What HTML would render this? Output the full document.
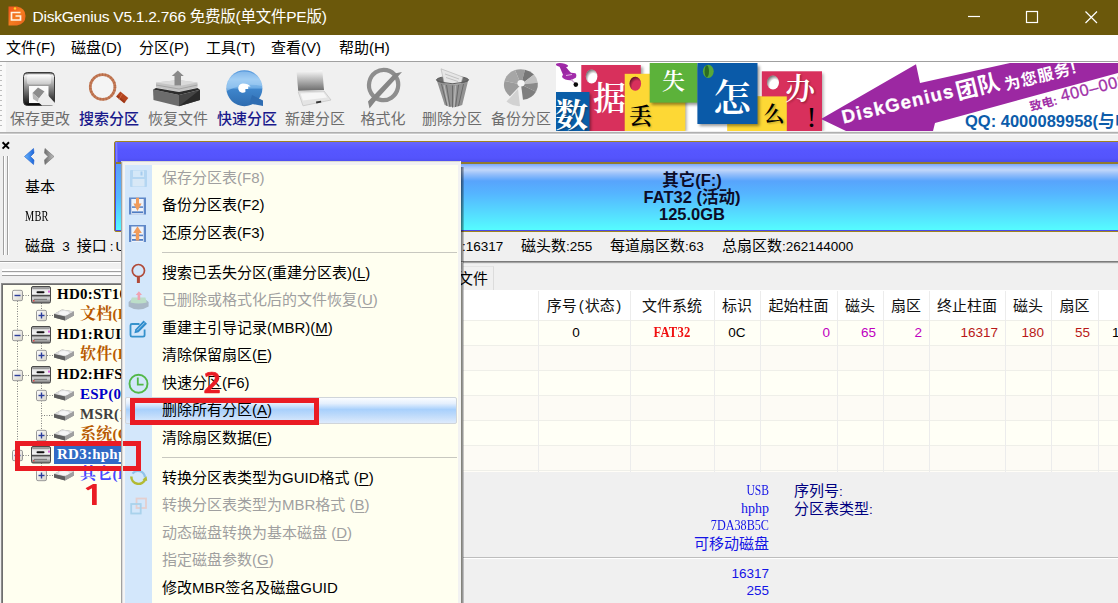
<!DOCTYPE html>
<html lang="zh-CN">
<head>
<meta charset="utf-8">
<title>DiskGenius</title>
<style>
html,body{margin:0;padding:0;}
body{width:1118px;height:603px;overflow:hidden;position:relative;background:#f0f0f0;
 font-family:"Liberation Sans","Noto Sans CJK SC",sans-serif;font-size:15px;color:#000;}
.a{position:absolute;}
.t{position:absolute;white-space:nowrap;line-height:20px;}
.ss{font-family:"Liberation Sans","Noto Sans CJK SC",sans-serif;}
.sf{font-family:"Liberation Serif","Noto Serif CJK SC",serif;}
.mo{font-family:"Liberation Mono","Noto Sans CJK SC",monospace;}
u{text-decoration:underline;text-underline-offset:2px;}
/* title */
#title{left:0;top:0;width:1118px;height:35.4px;background:#6b580b;}
#menubar{left:0;top:35px;width:1118px;height:26px;background:#fff;}
#toolbar{left:0;top:61px;width:1118px;height:71px;background:#f0f0f0;border-top:1px solid #a0a0a0;box-sizing:border-box;}
.tl{position:absolute;top:108.5px;width:80px;text-align:center;white-space:nowrap;font-size:15px;line-height:20px;color:#6d6d6d;}
.tl.b{color:#1a1a8c;font-weight:500;}
/* context menu */
#cm{left:121px;top:161px;width:339.5px;height:460px;background:#fffff0;box-sizing:border-box;border:4px solid #f2f2f2;border-right-width:3px;border-left-color:#f4f4f4;box-shadow:inset 1px 1px 0 rgba(120,120,120,.0);}
#cm .gut{left:0px;top:0px;width:27px;height:456px;background:#d3e7fb;}
.mi{position:absolute;left:162px;white-space:nowrap;font-size:15px;line-height:20px;color:#000;}
.mi.d{color:#a0a0a0;}
.sep{position:absolute;left:162px;width:295px;height:1px;background:#c8c8c0;}

.simb{font-family:"Liberation Mono","Noto Serif CJK SC",monospace;font-weight:bold;}
.tr{position:absolute;white-space:nowrap;line-height:20px;font-size:15px;font-weight:bold;font-family:"Liberation Serif","Noto Serif CJK SC",serif;letter-spacing:0.25px;}
.th{position:absolute;top:296px;white-space:nowrap;line-height:20px;font-size:15px;text-align:center;font-family:"Liberation Sans","Noto Sans CJK SC",sans-serif;color:#111;}
.td{position:absolute;top:323px;white-space:nowrap;line-height:20px;font-size:13.5px;text-align:right;font-family:"Liberation Sans","Noto Sans CJK SC",sans-serif;}
.vl{position:absolute;top:291px;width:1px;height:181px;background:#ececec;}
.hl{position:absolute;left:463px;width:655px;height:1px;background:#efefe9;}
.inf{position:absolute;white-space:nowrap;line-height:18px;font-size:15px;}
.cj{letter-spacing:0.3px;font-size:16px;}
</style>
</head>
<body>
<!-- title bar -->
<div class="a" id="title"></div>
<div class="t" style="left:32.5px;top:7px;font-size:15.5px;letter-spacing:-0.25px;color:#fff;">DiskGenius V5.1.2.766 免费版(单文件PE版)</div>
<svg class="a" style="left:0;top:0;" width="1118" height="35" viewBox="0 0 1118 35">
 <defs><linearGradient id="gIc" x1="0" y1="0" x2="1" y2="1"><stop offset="0" stop-color="#f0501c"/><stop offset="0.5" stop-color="#f47c20"/><stop offset="1" stop-color="#e8601c"/></linearGradient></defs>
 <path d="M8.5 6.5 H17 Q25.5 8 25.5 16 Q25.5 24 17 25.5 H8.5 Z" fill="url(#gIc)"/>
 <circle cx="15" cy="8.5" r="1.2" fill="#ffd428"/>
 <path d="M20.5 12.5 H11.5 V20 H20.5 V16 H15.5" fill="none" stroke="#fff4e0" stroke-width="1.7"/>
 <path d="M968 16.5 H980" stroke="#fff" stroke-width="1.2"/>
 <rect x="1026.5" y="11.5" width="11" height="11" fill="none" stroke="#fff" stroke-width="1.2"/>
 <path d="M1085.5 11.5 L1097 23 M1097 11.5 L1085.5 23" stroke="#fff" stroke-width="1.2"/>
</svg>
<!-- menubar -->
<div class="a" id="menubar"></div>
<div class="t" style="left:6px;top:38px;">文件(F)</div>
<div class="t" style="left:71px;top:38px;">磁盘(D)</div>
<div class="t" style="left:139px;top:38px;">分区(P)</div>
<div class="t" style="left:206px;top:38px;">工具(T)</div>
<div class="t" style="left:271px;top:38px;">查看(V)</div>
<div class="t" style="left:339px;top:38px;">帮助(H)</div>
<!-- toolbar -->
<div class="a" id="toolbar"></div>
<div class="a" style="left:0;top:132px;width:1118px;height:1px;background:#b0b0b0;"></div>
<div class="a" style="left:0;top:133px;width:1118px;height:1px;background:#cacaca;"></div>
<div class="a" style="left:0;top:134px;width:1118px;height:1px;background:#fbfbfb;"></div>
<div class="a" style="left:0;top:62px;width:6px;height:70px;background:#f9f9f9;"></div>
<div class="a" style="left:0;top:65px;width:2px;height:64px;background:repeating-linear-gradient(#bdbdbd 0,#bdbdbd 1.5px,transparent 1.5px,transparent 5px);"></div>
<!-- toolbar icons -->
<svg class="a" style="left:0;top:62px;" width="555" height="70" viewBox="0 62 555 70">
<defs>
<linearGradient id="gFl" x1="0" y1="0" x2="0" y2="1"><stop offset="0" stop-color="#3c3c3c"/><stop offset="0.08" stop-color="#f2f2f2"/><stop offset="0.3" stop-color="#b4b4b4"/><stop offset="0.6" stop-color="#6a6a6a"/><stop offset="0.92" stop-color="#1e1e1e"/><stop offset="1" stop-color="#000"/></linearGradient>
<linearGradient id="gFl2" x1="0" y1="0" x2="0" y2="1"><stop offset="0" stop-color="#fff"/><stop offset="1" stop-color="#c8c8c8"/></linearGradient>
<linearGradient id="gQ" x1="0" y1="0" x2="0" y2="1"><stop offset="0" stop-color="#4a90d8"/><stop offset="0.25" stop-color="#9ccaf2"/><stop offset="0.5" stop-color="#6aaae4"/><stop offset="0.52" stop-color="#3f86cc"/><stop offset="1" stop-color="#2e6cb0"/></linearGradient>
<linearGradient id="gLp" x1="0" y1="0" x2="0" y2="1"><stop offset="0" stop-color="#fafafa"/><stop offset="0.35" stop-color="#c8c8c8"/><stop offset="1" stop-color="#6c6c6c"/></linearGradient>
</defs>
<!-- save -->
<rect x="23.5" y="72.5" width="31" height="33" rx="4" fill="url(#gFl)" stroke="#3a3a3a"/>
<rect x="27" y="74.5" width="24" height="10" rx="2" fill="url(#gFl2)"/>
<rect x="29" y="86" width="19.5" height="17" fill="#fafafa"/>
<path d="M32.5 93 L38 87.5 L44.5 91.5 L39 98.5 Z" fill="#8c8c8c"/><path d="M32.5 93 L39 98.5 L38 102 L33 99 Z" fill="#b8b8b8"/>
<path d="M39 98.5 L44.5 91.5 L55 103 L55 105.5 L42 105.5 L38 102 Z" fill="#ededed"/>
<!-- search -->
<circle cx="102.6" cy="87" r="12.3" fill="#f6f6f6" fill-opacity="0.6" stroke="#c57c58" stroke-width="2.8"/>
<circle cx="102.6" cy="87" r="12.3" fill="none" stroke="#a85a38" stroke-width="2.8" stroke-dasharray="1 2" opacity="0.5"/>
<path d="M118.2 94 L126.2 100.6" stroke="#b4441e" stroke-width="6.6"/>
<path d="M117 96 L125 102.6" stroke="#8c2c10" stroke-width="2" opacity="0.55"/><path d="M122 94 L119 99.5" stroke="#d87850" stroke-width="1" opacity="0.7"/>
<!-- recover -->
<path d="M156 82.5 L178 80 L197.5 82.5 L197.5 87.5 L179 92 L156 87.5 Z" fill="#c4c4c4"/>
<path d="M156 82.5 L178 80 L197.5 82.5 L179 86 Z" fill="#dadada"/>
<path d="M156 85 L179 89 L197.5 85" fill="none" stroke="#9c9c9c" stroke-width="0.8"/>
<path d="M177.8 70.6 L183.8 76 H181 V85.5 H174.5 V76 H171.8 Z" fill="#8a8a8a"/>
<path d="M153 89.5 L179 95 L179 106.3 L153.5 100 Z" fill="#6c6c6c"/>
<path d="M179 95 L200 89.8 L200 100 L179 106.3 Z" fill="#444"/>
<path d="M179 106.3 L200 89.8 L200 100 Z" fill="#2a2a2a"/>
<path d="M153 89.5 L156 88 L179 92 L197.5 88 L200 89.8 L179 95 Z" fill="#2c2c2c"/>
<!-- quick -->
<circle cx="244.4" cy="88.2" r="18" fill="url(#gQ)"/>
<path d="M226.6 91 Q244 82 262.2 86 A18 18 0 0 0 226.6 91 Z" fill="#a8d2f6" opacity="0.55"/>
<path d="M252 95 L263 100.5 L263 106 L249.5 103.5 Z" fill="#2f6db2"/>
<path d="M243 83.6 A4.6 4.6 0 1 0 245.4 92 V89 H248.2 V86.6 H250.6 Q248 83.6 243 83.6 Z" fill="#fff"/>
<!-- new -->
<path d="M296.6 72.3 L322.3 70.2 L324 90 L298.2 90.8 Z" fill="url(#gLp)"/>
<path d="M298.2 91.8 L324 91 L331 100 L303 105.8 Z" fill="#e4e4e4" stroke="#c6c6c6" stroke-width="0.8"/>
<path d="M300.5 93.5 L323.5 92.5 L327 97.5 L303 100.5 Z" fill="#f6f6f6"/>
<path d="M316 101.6 L321 100.8 L321.3 102.6 L316.3 103.4 Z" fill="#333"/>
<!-- format -->
<ellipse cx="383.6" cy="85" rx="14.6" ry="15.2" fill="none" stroke="#8e8e8e" stroke-width="4.2" transform="rotate(12 383.6 85)"/>
<path d="M402 72 L394.5 73.5 L368 101.5 L369.5 108.5 L375.5 101 Z" fill="#868686"/>
<!-- delete -->
<path d="M436.5 79.5 Q452.5 86 468.4 79.5 L462.2 105 Q453.5 109 444.7 105 Z" fill="#929292"/>
<ellipse cx="452.5" cy="79.8" rx="16" ry="3.4" fill="#6e6e6e" stroke="#5a5a5a" stroke-width="1"/>
<path d="M441 68.8 L462.8 77 L461 83.4 Q452 85.5 444.2 83 Z" fill="#e6e6e6" stroke="#b0b0b0" stroke-width="0.6"/>
<path d="M445 74 L459 79 M446 77.5 L458 81.5" stroke="#bcbcbc" stroke-width="0.9"/>
<path d="M436.8 80.5 Q452.5 87 468.2 80.5" fill="none" stroke="#606060" stroke-width="1.2"/>
<path d="M441.5 84 L447 106 M446.5 85 L450 107 M452.5 85.5 V107.5 M458.5 85 L455.5 107 M463.5 84 L458.5 106" stroke="#6a6a6a" stroke-width="1"/>
<path d="M444 85 L448.5 106.5 M455.5 85.5 L454 107.5" stroke="#b8b8b8" stroke-width="1.2"/>
<!-- backup -->
<g transform="translate(521 84.5) scale(1 0.9)">
<path d="M0 0 L-6 -16 A17 17 0 0 1 4 -16.5 Z" fill="#9a9a9a"/>
<path d="M0 0 L4 -16.5 A17 17 0 0 1 13 -11 Z" fill="#767676"/>
<path d="M0 0 L13 -11 A17 17 0 0 1 16.8 -2 Z" fill="#c2c2c2"/>
<path d="M0 0 L16.8 -2 A17 17 0 0 1 15 8 Z" fill="#8a8a8a"/>
<path d="M0 0 L15 8 A17 17 0 0 1 2 16.9 Z" fill="#7e7e7e"/>
<path d="M0 0 L-6 -16 A17 17 0 0 0 -16.5 -4 Z" fill="#a6a6a6"/>
<path d="M0 0 L-16.5 -4 A17 17 0 0 0 -11 13 Z" fill="#9c9c9c"/>
<path d="M-3 5 L-14.5 19 Q-8 24.5 -1 24 Z" fill="#d2d2d2"/>
<circle cx="0" cy="-1.5" r="3.6" fill="#f4f4f4"/>
</g>
</svg>
<div class="tl" style="left:0px;">保存更改</div>
<div class="tl b" style="left:69px;">搜索分区</div>
<div class="tl" style="left:138px;">恢复文件</div>
<div class="tl b" style="left:207px;">快速分区</div>
<div class="tl" style="left:275px;">新建分区</div>
<div class="tl" style="left:343px;">格式化</div>
<div class="tl" style="left:412px;">删除分区</div>
<div class="tl" style="left:481px;">备份分区</div>

<!-- banner -->
<div class="a" id="banner" style="left:556px;top:62px;width:562px;height:69px;background:#fff;overflow:hidden;">
<svg class="a" style="left:-1px;top:1px;" width="563" height="68" viewBox="555 63 563 68">
<defs>
<filter id="sh" x="-10%" y="-10%" width="130%" height="130%"><feGaussianBlur stdDeviation="1.6"/></filter>
<radialGradient id="hole" cx="0.65" cy="0.7" r="0.75"><stop offset="0.55" stop-color="#000" stop-opacity="0"/><stop offset="1" stop-color="#000" stop-opacity="0.6"/></radialGradient>
<filter id="sh2" x="-20%" y="-20%" width="140%" height="140%"><feGaussianBlur stdDeviation="0.9"/></filter>
</defs>
<!-- pin -->
<ellipse cx="562" cy="65.2" rx="6.2" ry="2" fill="#a02aa8" transform="rotate(8 562 65)"/>
<path d="M559.5 66.5 L565.5 66.5 L571 73 L563.5 76 Z" fill="#9a26a2"/>
<path d="M562 77 Q562.5 73.5 567 72.2 L575.5 73.2 Q577.5 75.5 576 77.5 L571 80.2 Q565 80.5 562 77 Z" fill="#a22caa"/>
<path d="M566 75.5 L572 74.5" stroke="#e0b0e4" stroke-width="1"/>
<path d="M571 79.5 L575 83.2" stroke="#c8a0cc" stroke-width="1.1"/>
<circle cx="575.8" cy="84.6" r="2.3" fill="#0a0a0a"/>
<!-- 据 -->
<rect x="583" y="67" width="60" height="66" fill="#000" opacity="0.35" filter="url(#sh)"/>
<rect x="581.3" y="65" width="59.5" height="66" fill="#d8305c"/>
<ellipse cx="591.6" cy="76.5" rx="5.8" ry="7" fill="#fff"/><ellipse cx="591.6" cy="76.5" rx="5.8" ry="7" fill="url(#hole)"/>
<!-- 数 -->
<rect x="557" y="94" width="34" height="38" fill="#000" opacity="0.4" filter="url(#sh)"/>
<rect x="555.5" y="92" width="34" height="39" fill="#0a5ea8"/>
<!-- 丢 -->
<rect x="626.5" y="76" width="60" height="56" fill="#000" opacity="0.35" filter="url(#sh)"/>
<rect x="624.7" y="73.8" width="60.6" height="58" fill="#fdd835"/>
<ellipse cx="635.3" cy="83.8" rx="5.8" ry="7" fill="#d8305c"/><ellipse cx="635.3" cy="83.8" rx="5.8" ry="7" fill="url(#hole)"/>
<!-- 失 -->
<rect x="651.5" y="66" width="48" height="39" fill="#000" opacity="0.4" filter="url(#sh)"/>
<rect x="649.7" y="63" width="47.7" height="39.6" fill="#5cb23a"/>
<!-- 么 -->
<rect x="727.4" y="96.4" width="59.4" height="36" fill="#fdd835"/>
<!-- 办 -->
<rect x="763.5" y="73.5" width="60" height="58" fill="#000" opacity="0.3" filter="url(#sh)"/>
<rect x="761.8" y="71.3" width="60.2" height="60" fill="#d8305c"/>
<rect x="727.4" y="96.4" width="59.4" height="36" fill="#fdd835"/>
<ellipse cx="773" cy="82.6" rx="6" ry="7" fill="#fff"/><ellipse cx="773" cy="82.6" rx="6" ry="7" fill="url(#hole)"/>
<!-- 怎 -->
<rect x="699.5" y="66" width="60" height="60" fill="#000" opacity="0.4" filter="url(#sh)"/>
<rect x="697.4" y="63" width="60.1" height="61" fill="#0a5aa8"/>
<ellipse cx="708.3" cy="71.3" rx="5.4" ry="6.6" fill="#58a838"/>
<ellipse cx="706.8" cy="71.3" rx="2.2" ry="6" fill="#2c6c24"/>
<!-- arrow -->
<path d="M821 119 L916 64.3 L920 83 L1010 63 L1118 63 L1118 73 L935 123 L933 131 L846 131 Z" fill="#9c28a2"/>
<g font-family="'Liberation Sans','Noto Sans CJK SC',sans-serif" font-weight="bold" fill="#fff">
<text transform="translate(843.5 123.5) rotate(-13.5)" font-size="18.5" letter-spacing="1.35" stroke="#fff" stroke-width="0.3">DiskGenius</text>
<text transform="translate(958 99.5) rotate(-14)" font-size="22" letter-spacing="0.5">团队</text>
<text transform="translate(1006 90.5) rotate(-14)" font-size="16" letter-spacing="1">为您服务!</text>
</g>
<text transform="translate(1031 111) rotate(-14)" font-family="'Liberation Sans','Noto Sans CJK SC',sans-serif" font-weight="bold" font-size="12" fill="#a030a8">致电:</text>
<text transform="translate(1062 101.5) rotate(-14)" font-family="'Liberation Sans','Noto Sans CJK SC',sans-serif" font-size="16.5" fill="#a030a8" letter-spacing="0.6" stroke="#a030a8" stroke-width="0.3">400–0089958</text>
<text x="965" y="127" font-family="'Liberation Sans','Noto Sans CJK SC',sans-serif" font-weight="bold" font-size="16.5" fill="#0c5caa">QQ: 4000089958(与电话同号)</text>
<!-- chars -->
<g font-family="'Liberation Serif','Noto Serif CJK SC',serif">
<text x="556" y="128" font-size="33" fill="#000" opacity="0.5" filter="url(#sh2)">数</text>
<text x="555" y="127" font-size="33" fill="#fff" font-weight="bold">数</text>
<text x="593" y="110" font-size="33" fill="#fff" font-weight="600">据</text>
<text x="630" y="125" font-size="23" fill="#000" opacity="0.4" filter="url(#sh2)">丢</text>
<text x="629" y="124" font-size="23" fill="#000" font-weight="600">丢</text>
<text x="662" y="89" font-size="23" fill="#fff" font-weight="600">失</text>
<text x="713" y="111" font-size="38" fill="#fff" font-weight="600">怎</text>
<text x="765" y="122" font-size="21" fill="#000" opacity="0.4" filter="url(#sh2)">么</text>
<text x="763.5" y="121" font-size="21" fill="#000" font-weight="600">么</text>
<text x="786.5" y="100" font-size="30" fill="#300" opacity="0.5" filter="url(#sh2)">办</text>
<text x="785" y="99" font-size="30" fill="#fff" font-weight="600">办</text>
<text x="806.5" y="127" font-size="30" fill="#000" font-weight="normal">!</text>
</g>
</svg>
</div>
<!-- disk nav area -->
<svg class="a" style="left:0;top:134px;" width="115" height="130" viewBox="0 134 115 130">
 <path d="M2.6 142.2 L9 148.6 M9 142.2 L2.6 148.6" stroke="#000" stroke-width="2"/>
 <rect x="3" y="156" width="1" height="99" fill="#a0a0a0"/><rect x="4" y="156" width="1" height="99" fill="#fff"/>
 <rect x="7" y="156" width="1" height="99" fill="#a0a0a0"/><rect x="8" y="156" width="1" height="99" fill="#fff"/>
 <defs><linearGradient id="gAr" x1="0" y1="0" x2="1" y2="0"><stop offset="0" stop-color="#6ab8ff"/><stop offset="1" stop-color="#1c64d8"/></linearGradient>
 <linearGradient id="gAr2" x1="0" y1="0" x2="1" y2="0"><stop offset="0" stop-color="#6c6c6c"/><stop offset="1" stop-color="#c0c0c0"/></linearGradient></defs>
 <path d="M33.5 148.5 L24.5 156.5 L33.5 164.5 L34 160 L30.5 156.5 L34 153 Z" fill="url(#gAr)" stroke="#1a5ccc" stroke-width="0.6"/>
 <path d="M45 148.5 L54 156.5 L45 164.5 L44.5 160 L48 156.5 L44.5 153 Z" fill="url(#gAr2)" stroke="#707070" stroke-width="0.6"/>
</svg>
<div class="t" style="left:25px;top:177px;font-size:15px;">基本</div>
<div class="t sf" style="left:25px;top:207px;font-size:14px;letter-spacing:0.3px;transform:scaleX(0.74);transform-origin:0 0;">MBR</div>
<div class="t" style="left:25px;top:236px;font-size:15px;word-spacing:3px;width:420px;overflow:hidden;"><span>磁盘 <span style="font-size:13.5px">3</span> 接口<span style="font-size:13.5px;letter-spacing:2px;margin-left:3px">:USB</span> 型号:hphp 序列号:7DA38B5C 容量:125.0GB(128000MB) 柱面数</span></div>
<div class="t" style="left:462px;top:236px;font-size:15px;"><span style="font-size:13.5px;letter-spacing:0">:16317</span></div>
<div class="t" style="left:521px;top:236px;font-size:15px;">磁头数<span style="font-size:13.5px">:255</span></div>
<div class="t" style="left:610px;top:236px;font-size:15px;">每道扇区数<span style="font-size:13.5px">:63</span></div>
<div class="t" style="left:722px;top:236px;font-size:15px;">总扇区数<span style="font-size:13.5px">:262144000</span></div>
<!-- separators -->
<div class="a" style="left:0;top:261px;width:1118px;height:1px;background:#9c9c9c;"></div>
<div class="a" style="left:0;top:262px;width:1118px;height:1px;background:#fff;"></div>
<div class="a" style="left:463px;top:261px;width:655px;height:1px;background:#7c7c7c;"></div>
<div class="a" style="left:463px;top:262px;width:655px;height:1px;background:#a4a4a4;"></div>
<div class="a" style="left:463px;top:263px;width:655px;height:1px;background:#e4e4e4;"></div>
<div class="a" style="left:2px;top:269px;width:460px;height:2px;background:#fff;"></div>
<div class="a" style="left:2px;top:271px;width:460px;height:1px;background:#a0a0a0;"></div>
<div class="a" style="left:2px;top:273px;width:460px;height:2px;background:#fff;"></div>
<div class="a" style="left:2px;top:275px;width:460px;height:1px;background:#a0a0a0;"></div>
<!-- tree panel -->
<div class="a" style="left:1px;top:283px;width:461px;height:330px;background:#fffff0;border:1px solid #8c8c8c;border-right:0;box-shadow:inset 1px 1px 0 #6e6e6e;box-sizing:border-box;"></div>
<svg class="a" style="left:0;top:285px;" width="121" height="318" viewBox="0 284 121 318">
<defs>
<linearGradient id="gBx" x1="0" y1="0" x2="1" y2="1"><stop offset="0" stop-color="#fff"/><stop offset="1" stop-color="#d6d3c8"/></linearGradient>
<linearGradient id="gHd" x1="0" y1="0" x2="0" y2="1"><stop offset="0" stop-color="#7a7a7a"/><stop offset="0.18" stop-color="#e6e6e6"/><stop offset="0.45" stop-color="#f4f4f4"/><stop offset="0.55" stop-color="#8a8a8a"/><stop offset="0.7" stop-color="#dcdcdc"/><stop offset="1" stop-color="#6e6e6e"/></linearGradient>
<g id="hd"><rect x="1.5" y="-0.5" width="19" height="16.5" rx="1.5" fill="url(#gHd)" stroke="#4a4a4a"/><rect x="2.5" y="1" width="17" height="1.2" fill="#9a9a9a"/><rect x="6.5" y="4.2" width="8" height="2" rx="1" fill="#111"/><rect x="2" y="8" width="18" height="1.2" fill="#4c4c4c"/><rect x="4" y="11.8" width="13" height="1.2" fill="#7c7c7c"/><rect x="18.2" y="3.6" width="1.6" height="2" fill="#d040d0"/><rect x="3" y="13" width="1.5" height="1.5" fill="#e05050"/></g>
<g id="pt"><path d="M1 7 L9 2.5 L21 4.5 L21 8.5 L12 13.5 L1 10.5 Z" fill="#8c8c8c"/><path d="M1 7 L9 2.5 L21 4.5 L12 9.5 Z" fill="#dedede"/><ellipse cx="11" cy="6" rx="5" ry="2" fill="#f6f6f6"/><path d="M1 7 L12 9.5 L12 13.5 L1 10.5 Z" fill="#5e5e5e"/><path d="M12 9.5 L21 4.5 L21 8.5 L12 13.5Z" fill="#a0a0a0"/></g>
</defs>
<path d="M17.5 300 V454" stroke="#808080" stroke-width="1" stroke-dasharray="1 1.5"/>
<path d="M41.5 302 V314" stroke="#808080" stroke-width="1" stroke-dasharray="1 1.5"/>
<path d="M41.5 342 V354" stroke="#808080" stroke-width="1" stroke-dasharray="1 1.5"/>
<path d="M41.5 382 V434" stroke="#808080" stroke-width="1" stroke-dasharray="1 1.5"/>
<path d="M41.5 462 V474" stroke="#808080" stroke-width="1" stroke-dasharray="1 1.5"/>
<path d="M23 294.5 H30" stroke="#808080" stroke-width="1" stroke-dasharray="1 1.5"/>
<rect x="12.5" y="289.3" width="10" height="10.4" rx="1.5" fill="url(#gBx)" stroke="#9a9a9a"/><path d="M14.5 294.5 H20.5" stroke="#2a3c9c" stroke-width="1.4"/>
<use href="#hd" x="30" y="286"/>
<path d="M47 314.5 H54" stroke="#808080" stroke-width="1" stroke-dasharray="1 1.5"/>
<rect x="36.5" y="309.3" width="10" height="10.4" rx="1.5" fill="url(#gBx)" stroke="#9a9a9a"/><path d="M38.5 314.5 H44.5" stroke="#2a3c9c" stroke-width="1.4"/><path d="M41.5 311.5 V317.5" stroke="#2a3c9c" stroke-width="1.4"/>
<use href="#pt" x="53" y="306"/>
<path d="M23 334.5 H30" stroke="#808080" stroke-width="1" stroke-dasharray="1 1.5"/>
<rect x="12.5" y="329.3" width="10" height="10.4" rx="1.5" fill="url(#gBx)" stroke="#9a9a9a"/><path d="M14.5 334.5 H20.5" stroke="#2a3c9c" stroke-width="1.4"/>
<use href="#hd" x="30" y="326"/>
<path d="M47 354.5 H54" stroke="#808080" stroke-width="1" stroke-dasharray="1 1.5"/>
<rect x="36.5" y="349.3" width="10" height="10.4" rx="1.5" fill="url(#gBx)" stroke="#9a9a9a"/><path d="M38.5 354.5 H44.5" stroke="#2a3c9c" stroke-width="1.4"/><path d="M41.5 351.5 V357.5" stroke="#2a3c9c" stroke-width="1.4"/>
<use href="#pt" x="53" y="346"/>
<path d="M23 374.5 H30" stroke="#808080" stroke-width="1" stroke-dasharray="1 1.5"/>
<rect x="12.5" y="369.3" width="10" height="10.4" rx="1.5" fill="url(#gBx)" stroke="#9a9a9a"/><path d="M14.5 374.5 H20.5" stroke="#2a3c9c" stroke-width="1.4"/>
<use href="#hd" x="30" y="366"/>
<path d="M47 394.5 H54" stroke="#808080" stroke-width="1" stroke-dasharray="1 1.5"/>
<rect x="36.5" y="389.3" width="10" height="10.4" rx="1.5" fill="url(#gBx)" stroke="#9a9a9a"/><path d="M38.5 394.5 H44.5" stroke="#2a3c9c" stroke-width="1.4"/><path d="M41.5 391.5 V397.5" stroke="#2a3c9c" stroke-width="1.4"/>
<use href="#pt" x="53" y="386"/>
<path d="M41.5 414.5 H54" stroke="#808080" stroke-width="1" stroke-dasharray="1 1.5"/>
<use href="#pt" x="53" y="406"/>
<path d="M47 434.5 H54" stroke="#808080" stroke-width="1" stroke-dasharray="1 1.5"/>
<rect x="36.5" y="429.3" width="10" height="10.4" rx="1.5" fill="url(#gBx)" stroke="#9a9a9a"/><path d="M38.5 434.5 H44.5" stroke="#2a3c9c" stroke-width="1.4"/><path d="M41.5 431.5 V437.5" stroke="#2a3c9c" stroke-width="1.4"/>
<use href="#pt" x="53" y="426"/>
<path d="M23 454.5 H30" stroke="#808080" stroke-width="1" stroke-dasharray="1 1.5"/>
<rect x="12.5" y="449.3" width="10" height="10.4" rx="1.5" fill="url(#gBx)" stroke="#9a9a9a"/><path d="M14.5 454.5 H20.5" stroke="#2a3c9c" stroke-width="1.4"/>
<use href="#hd" x="30" y="446"/>
<path d="M47 474.5 H54" stroke="#808080" stroke-width="1" stroke-dasharray="1 1.5"/>
<rect x="36.5" y="469.3" width="10" height="10.4" rx="1.5" fill="url(#gBx)" stroke="#9a9a9a"/><path d="M38.5 474.5 H44.5" stroke="#2a3c9c" stroke-width="1.4"/><path d="M41.5 471.5 V477.5" stroke="#2a3c9c" stroke-width="1.4"/>
<use href="#pt" x="53" y="466"/>
</svg>
<div class="a" style="left:54px;top:445px;width:80px;height:19px;background:#316ac5;"></div>
<div class="tr" style="left:57px;top:284px;color:#000;">HD0:ST1000DM003-1CH162(932GB)</div>
<div class="tr" style="left:80px;top:304px;color:#b85a00;"><span class="cj">文档</span>(D:)</div>
<div class="tr" style="left:57px;top:324px;color:#000;">HD1:RUILI-SSD(112GB)</div>
<div class="tr" style="left:80px;top:344px;color:#b85a00;"><span class="cj">软件</span>(E:)</div>
<div class="tr" style="left:57px;top:364px;color:#000;">HD2:HFS128G39TND-N210A(119GB)</div>
<div class="tr" style="left:80px;top:384px;color:#0000c8;">ESP(0)</div>
<div class="tr" style="left:80px;top:404px;color:#404040;">MSR(1)</div>
<div class="tr" style="left:80px;top:424px;color:#b85a00;"><span class="cj">系统</span>(C:)</div>
<div class="tr" style="left:57px;top:444px;color:#fff;">RD3:hphp(125GB)</div>
<div class="tr" style="left:80px;top:464px;color:#4848ff;"><span class="cj">其它</span>(F:)</div>
<!-- right panel -->
<div class="a" style="left:463px;top:266px;width:31px;height:24px;box-sizing:border-box;border-right:1px solid #dcdcdc;border-top:1px solid #e4e4e4;"></div>
<div class="t" style="left:428px;top:269px;font-size:15px;">浏览文件</div>
<div class="a" style="left:463px;top:290px;width:655px;height:182px;background:#fffdf7;"></div>
<div class="a" style="left:463px;top:290px;width:655px;height:31px;background:#fff;"></div>
<div class="a" style="left:463px;top:321px;width:655px;height:25px;background:#fffff6;"></div>
<div class="a" style="left:463px;top:346px;width:655px;height:25px;background:#fdfbf5;"></div>
<div class="a" style="left:463px;top:371px;width:655px;height:25px;background:#fffff6;"></div>
<div class="a" style="left:463px;top:396px;width:655px;height:25px;background:#fdfbf5;"></div>
<div class="a" style="left:463px;top:421px;width:655px;height:25px;background:#fffff6;"></div>
<div class="a" style="left:463px;top:446px;width:655px;height:25px;background:#fdfbf5;"></div>
<div class="hl" style="top:320px;"></div>
<div class="hl" style="top:345px;"></div>
<div class="hl" style="top:370px;"></div>
<div class="hl" style="top:395px;"></div>
<div class="hl" style="top:420px;"></div>
<div class="hl" style="top:445px;"></div>
<div class="hl" style="top:470px;"></div>
<div class="vl" style="left:538px;"></div>
<div class="vl" style="left:630px;"></div>
<div class="vl" style="left:714px;"></div>
<div class="vl" style="left:760px;"></div>
<div class="vl" style="left:837px;"></div>
<div class="vl" style="left:883px;"></div>
<div class="vl" style="left:929px;"></div>
<div class="vl" style="left:1005px;"></div>
<div class="vl" style="left:1051px;"></div>
<div class="vl" style="left:1098px;"></div>
<div class="th" style="left:538px;width:92px;">序号<span style="margin:0 1px 0 2px">(</span>状态<span style="margin-left:1.5px">)</span></div>
<div class="th" style="left:630px;width:84px;">文件系统</div>
<div class="th" style="left:714px;width:46px;">标识</div>
<div class="th" style="left:760px;width:77px;">起始柱面</div>
<div class="th" style="left:837px;width:46px;">磁头</div>
<div class="th" style="left:883px;width:46px;">扇区</div>
<div class="th" style="left:929px;width:76px;">终止柱面</div>
<div class="th" style="left:1005px;width:46px;">磁头</div>
<div class="th" style="left:1051px;width:47px;">扇区</div>
<div class="td" style="left:538px;width:92px;text-align:center;transform:translateX(-8px);">0</div>
<div class="td" style="left:630px;width:84px;text-align:center;color:#f01010;font-size:14px;letter-spacing:0.2px;font-family:'Liberation Serif',serif;font-weight:bold;transform:scaleX(0.9);">FAT32</div>
<div class="td" style="left:714px;width:46px;text-align:center;">0C</div>
<div class="td" style="left:770px;width:60px;color:#c000c0;">0</div>
<div class="td" style="left:816px;width:60px;color:#c000c0;">65</div>
<div class="td" style="left:862px;width:60px;color:#c000c0;">2</div>
<div class="td" style="left:938px;width:60px;color:#b81818;">16317</div>
<div class="td" style="left:984px;width:60px;color:#b81818;">180</div>
<div class="td" style="left:1030px;width:60px;color:#b81818;">55</div>
<div class="td" style="left:1112px;text-align:left;color:#000;">125.0GB</div>
<!-- info area -->
<div class="a" style="left:463px;top:472px;width:655px;height:131px;background:#f0f0f0;"></div>
<div class="a" style="left:463px;top:557px;width:655px;height:1px;background:#bdbdbd;"></div>
<div class="a" style="left:463px;top:558px;width:655px;height:1px;background:#fff;"></div>
<div class="inf sf" style="left:569px;width:200px;text-align:right;top:482px;color:#1414e6;font-size:14px;transform:scaleX(0.83);transform-origin:100% 0;">USB</div>
<div class="inf sf" style="left:569px;width:200px;text-align:right;top:499.5px;color:#1414e6;font-size:14px;">hphp</div>
<div class="inf sf" style="left:569px;width:200px;text-align:right;top:517px;color:#1414e6;font-size:14px;transform:scaleX(0.87);transform-origin:100% 0;">7DA38B5C</div>
<div class="inf ss" style="left:569px;width:200px;text-align:right;top:535px;color:#1414e6;font-size:15px;">可移动磁盘</div>
<div class="inf ss" style="left:569px;width:200px;text-align:right;top:564.5px;color:#1414e6;font-size:13.5px;">16317</div>
<div class="inf ss" style="left:569px;width:200px;text-align:right;top:582px;color:#1414e6;font-size:13.5px;">255</div>
<div class="inf" style="left:794px;top:482px;color:#000080;">序列号<span style="font-size:13.5px">:</span></div>
<div class="inf" style="left:794px;top:499.5px;color:#000080;">分区表类型<span style="font-size:13.5px">:</span></div>
<!-- partition bar -->
<div class="a" id="pbar" style="left:114px;top:140.6px;width:1010px;height:91px;box-sizing:border-box;border:1.6px solid #a08420;border-radius:2px 0 0 2px;background:linear-gradient(#6666ff 0,#5656ff 8px,#5454fc 16px,#4a4ae8 21px,#4a4ae8 100%);"></div>
<div class="a" style="left:116px;top:163px;width:1002px;height:67px;border-radius:0 0 0 4px;background:linear-gradient(#6a9cff 0,#a4c4fc 4px,#c0d6fa 7px,#98c0fa 11px,#58a4fc 18px,#55b4ff 30px,#55fcff 100%);"></div>

<div class="t" style="left:592px;width:200px;text-align:center;top:169.5px;font-weight:bold;font-size:16.5px;color:#0c0c28;">其它(F:)</div>
<div class="t" style="left:592px;width:200px;text-align:center;top:187px;font-weight:bold;font-size:16.5px;color:#0c0c28;">FAT32 (活动)</div>
<div class="t" style="left:592px;width:200px;text-align:center;top:204px;font-weight:bold;font-size:16.5px;color:#0c0c28;">125.0GB</div>
<div class="a" style="left:116px;top:162px;width:1002px;height:1.5px;background:#907a30;"></div>
<div class="a" style="left:115.6px;top:142px;width:2.5px;height:20px;background:linear-gradient(90deg,#8a8aff,#5a5aff);"></div>
<div class="a" style="left:115.6px;top:163.5px;width:6px;height:66px;background:linear-gradient(#5c9cf8,#55b8ff 50%,#55f8ff);"></div>
<!-- context menu -->
<div class="a" style="left:460.3px;top:167px;width:3.6px;height:440px;background:linear-gradient(90deg,rgba(0,0,0,.58),rgba(0,0,0,.45) 50%,rgba(0,0,0,.14));"></div>
<div class="a" style="left:121px;top:161px;width:1px;height:445px;background:#a2a2a2;z-index:2"></div><div class="a" style="left:122px;top:161px;width:1px;height:445px;background:#dcdcdc;z-index:2"></div><div class="a" style="left:121px;top:161px;width:339px;height:1px;background:#d8d8d0;z-index:2"></div>
<div class="a" id="cm"><div class="a gut"></div></div>
<!-- menu icons -->
<svg class="a" style="left:125px;top:165px;" width="27" height="438" viewBox="125 165 27 438">
<!-- save disabled -->
<rect x="130" y="170" width="17" height="17" rx="1" fill="#b4d6f2"/>
<rect x="133" y="170.5" width="11" height="6.5" fill="#d4e8f8"/><rect x="140.5" y="171.5" width="2" height="4" fill="#a6ccee"/>
<rect x="132.5" y="179" width="12" height="7.5" fill="#d8e8f6"/>
<!-- backup -->
<rect x="129" y="197.5" width="17" height="17" fill="#5f88c8"/>
<rect x="131.3" y="199" width="12.4" height="15.5" fill="#eef3fa"/>
<rect x="132" y="206.3" width="11" height="1.6" fill="#5f88c8"/><rect x="132" y="211.4" width="11" height="1.8" fill="#4f7cc2"/>
<path d="M136 197.8 H139 V203.6 H141.6 L137.5 211 L133.4 203.6 H136 Z" fill="#f09c5c"/>
<!-- restore -->
<rect x="129" y="225" width="17" height="17" fill="#5f88c8"/>
<rect x="131.3" y="226.5" width="12.4" height="15.5" fill="#eef3fa"/>
<rect x="132" y="234.6" width="11" height="1.6" fill="#5f88c8"/><rect x="132" y="239" width="11" height="1.8" fill="#4f7cc2"/>
<path d="M137.5 226.2 L141.8 233 H139.2 V240.5 H135.8 V233 H133.2 Z" fill="#f09c5c"/>
<!-- search -->
<circle cx="138.4" cy="270.6" r="6.1" fill="none" stroke="#b04a38" stroke-width="1.7"/>
<path d="M138.4 277 V283" stroke="#b04a38" stroke-width="3"/>
<!-- recover disabled -->
<path d="M128.6 302 L131.5 299.5 H145.5 L148.6 302 V306.5 Q144 309.5 138.6 309.5 Q133 309.5 128.6 306.5 Z" fill="#a9b8c6"/>
<path d="M131.8 297.6 H145.4 L146.8 302.4 Q138.6 304.5 130.4 302.4 Z" fill="#bcdec8"/>
<path d="M138.9 291.2 L142 295 H140.2 V300 H137.6 V295 H135.8 Z" fill="#f0a2b2"/>
<!-- mbr -->
<path d="M139.5 324 H132 Q130.5 324 130.5 325.5 V335 Q130.5 336.6 132 336.6 H143 Q144.6 336.6 144.6 335 V329.5" fill="none" stroke="#3692cc" stroke-width="1.8"/>
<path d="M134.4 333.2 L135.4 329.2 L143.6 320.6 L147 323.8 L138.6 332.2 Z" fill="#2f8ccc"/>
<path d="M137 330.4 L144.6 322.6" stroke="#bfe0f6" stroke-width="0.8"/>
<!-- clock -->
<circle cx="138.5" cy="383.8" r="9" fill="none" stroke="#52b848" stroke-width="1.9"/>
<path d="M137.8 377.6 V384.6 H143.6" fill="none" stroke="#52b848" stroke-width="1.8"/>
<!-- convert guid -->
<path d="M132.5 473.6 A7 7 0 0 1 145 477.5" fill="none" stroke="#90c2ea" stroke-width="2.3"/>
<path d="M145.3 479 A7.2 7.2 0 0 1 131.3 476.5" fill="none" stroke="#b2ba34" stroke-width="2.5"/>
<path d="M142.5 479.5 L147.2 481 L146.6 476.2 Z" fill="#b2ba34"/>
<!-- convert mbr disabled -->
<rect x="136.5" y="498.5" width="9.5" height="9.5" fill="none" stroke="#e4cfcf" stroke-width="1.8"/>
<rect x="131.2" y="504" width="9.5" height="9.5" fill="none" stroke="#a9d2ec" stroke-width="1.8"/>
</svg>
<!-- highlight -->
<div class="a" style="left:125px;top:397px;width:332px;height:27px;box-sizing:border-box;border:1px solid #d0d5da;border-radius:2px;background:linear-gradient(#fbfdff 0,#e4effd 22%,#a8d0fc 46%,#bfdbfb 70%,#deebfc 100%);"></div>
<div class="mi d" style="top:168px;">保存分区表(F8)</div>
<div class="mi" style="top:195px;">备份分区表(F2)</div>
<div class="mi" style="top:223px;">还原分区表(F3)</div>
<div class="sep" style="top:252px;"></div>
<div class="mi" style="top:263px;">搜索已丢失分区(重建分区表)(<u>L</u>)</div>
<div class="mi d" style="top:290px;">已删除或格式化后的文件恢复(<u>U</u>)</div>
<div class="mi" style="top:318px;">重建主引导记录(MBR)(<u>M</u>)</div>
<div class="mi" style="top:345px;">清除保留扇区(<u>E</u>)</div>
<div class="mi" style="top:373px;">快速分区(F6)</div>
<div class="mi" style="top:400px;">删除所有分区(<u>A</u>)</div>
<div class="mi" style="top:428px;">清除扇区数据(<u>E</u>)</div>
<div class="sep" style="top:457px;"></div>
<div class="mi" style="top:468px;">转换分区表类型为GUID格式 (<u>P</u>)</div>
<div class="mi d" style="top:495px;">转换分区表类型为MBR格式 (<u>B</u>)</div>
<div class="mi d" style="top:523px;">动态磁盘转换为基本磁盘 (<u>D</u>)</div>
<div class="mi d" style="top:550px;">指定磁盘参数(<u>G</u>)</div>
<div class="mi" style="top:578px;">修改MBR签名及磁盘GUID</div>
<!-- annotations -->
<div class="a" style="left:130px;top:398px;width:189px;height:27px;box-sizing:border-box;border:5px solid #ea1c24;"></div>
<div class="a" style="left:15px;top:441px;width:126px;height:30px;box-sizing:border-box;border:5px solid #ea1c24;"></div>
<div class="t" style="left:203.2px;top:366px;font-size:28px;line-height:34px;transform:scaleX(1.13);transform-origin:0 0;font-weight:bold;-webkit-text-stroke:0.7px #ea1c24;color:#ea1c24;font-family:NanumGothic,'Liberation Sans',sans-serif;">2</div>
<div class="t" style="left:79.8px;top:479px;font-size:28.5px;line-height:32px;transform:scaleX(1.55);transform-origin:0 0;font-weight:bold;color:#ea1c24;font-family:NanumGothic,'Liberation Sans',sans-serif;">1</div>
</body>
</html>
